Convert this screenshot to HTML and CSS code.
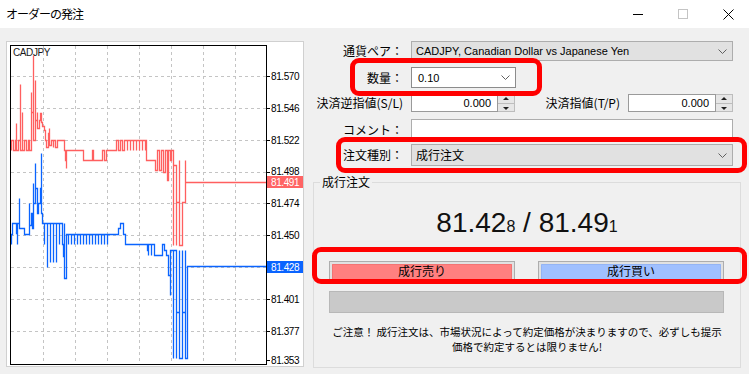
FILE: index.html
```html
<!DOCTYPE html>
<html lang="ja">
<head>
  <meta charset="UTF-8">
  <title>オーダーの発注</title>
  <link rel="stylesheet" href="styles.css">
</head>
<body>
  <div class="titlebar">
    <span class="title">オーダーの発注</span>
    <div class="win-controls">
      <svg width="11" height="11" viewBox="0 0 11 11"><path d="M0 5.5H10" stroke="#000" stroke-width="1"/></svg>
      <svg width="11" height="11" viewBox="0 0 11 11"><rect x="0.5" y="0.5" width="9" height="9" fill="none" stroke="#c4c4c4"/></svg>
      <svg width="11" height="11" viewBox="0 0 11 11"><path d="M0.5 0.5L10.5 10.5M10.5 0.5L0.5 10.5" stroke="#000" stroke-width="1"/></svg>
    </div>
  </div>

  <div class="main">
    <!-- tick chart -->
    <div class="chart">
      <svg width="298" height="326" viewBox="6 41 298 326">
        <rect x="6.5" y="41.5" width="297" height="325" fill="#fff" stroke="#d0d0d0"/>
        <g class="grid" stroke="#c4c4c4" stroke-dasharray="3 3" stroke-width="1">
          <path d="M43.5 46V364M75.5 46V364M107.5 46V364M139.5 46V364M171.5 46V364M203.5 46V364M235.5 46V364"/>
          <path d="M11 76.5H266M11 108.5H266M11 140.5H266M11 172.5H266M11 203.5H266M11 235.5H266M11 267.5H266M11 299.5H266M11 331.5H266"/>
        </g>
        <g stroke="#000" stroke-width="1">
          <path d="M266 76.5H270M266 108.5H270M266 140.5H270M266 172.5H270M266 203.5H270M266 235.5H270M266 267.5H270M266 299.5H270M266 331.5H270M266 360.5H270"/>
        </g>
        <g class="lines" transform="translate(0.5 0.5)" fill="none" stroke-width="1.3">
          <path stroke="#ff5f5f"
            d="M11 150V140H13V150H15V140H16V123V150H18V140H20V84V150H22V112V150H24V140H26V150H28V140H29V150H31V92V112H33V55V140H35V80V120H37V112V128H39V120H40V113H41V122H42V126H44V130H45V140H46V147H48V140V133H49V128V145H51V140H53V147V140H55V147H57V140H64V150H65V160H66V168V150H83V160H92V150H93V160H102V150H104V160H106V150H116V140H118V150H120V140H122V150H124V140H127V150V140H130V150V140H133V150V140H136V150V140H139V150V140H142V150V140H145V150V140H146V160H155V170H157V150H159V170H161V150H163V172H165V150H167V180H168V150H170V160H171V150H173V245V165H176V245V202H179V160V245H182V202H185V160V182H266"/>
          <path stroke="#0a64ff"
            d="M11 244V234H12V223H16V233H17V244V223H19V198V228H24V234H29V203V225H31V213H32V228H33V183V203H35V163V188H37V213H38V203H40V188H41V153V213H42V223H44V244V223H47V267V223H50V262V223H53V262V223H56V262V223H59V244V223H62V244H63V256H64V223V278H66V263V234H68V244V234H71V244V234H74V244V234H77V244V234H80V244V234H83V244V234H86V244V234H89V244V234H92V244V234H95V244V234H98V244V234H101V244V234H104V244V234H107V244V234H118V228H120V223H123V234H125V244H147V250H148V255V244H151V255V244H154V255H162V244H164V250H166V255H168V275H170V295V250H173V358V250H176V358V312H179V250V358H182V250V312H185V250V358H187V266H266"/>
        </g>
        <rect x="10.5" y="45.5" width="256" height="319" fill="none" stroke="#000"/>
        <text class="sym" x="13" y="56">CADJPY</text>
        <g class="axis">
          <text x="271" y="80">81.570</text>
          <text x="271" y="112">81.546</text>
          <text x="271" y="144">81.522</text>
          <text x="271" y="175">81.498</text>
          <text x="271" y="207">81.474</text>
          <text x="271" y="239">81.450</text>
          <text x="271" y="303">81.401</text>
          <text x="271" y="335">81.377</text>
          <text x="271" y="364">81.353</text>
        </g>
        <rect x="267" y="176" width="36" height="12" fill="#ff6464"/>
        <text class="tag" x="271" y="186">81.491</text>
        <rect x="267" y="261" width="36" height="12" fill="#0a64ff"/>
        <text class="tag" x="271" y="271">81.428</text>
      </svg>
    </div>

    <div class="panel">
      <div class="row r1">
        <label class="lbl">通貨ペア：</label>
        <div class="combo wide">
          <span class="latin">CADJPY, Canadian Dollar vs Japanese Yen</span>
          <svg width="9" height="5" viewBox="0 0 9 5"><path d="M0.5 0.5L4.5 4.5L8.5 0.5" fill="none" stroke="#606060"/></svg>
        </div>
      </div>
      <div class="row r2">
        <label class="lbl">数量：</label>
        <div class="combo volume">
          <span class="latin">0.10</span>
          <svg width="9" height="5" viewBox="0 0 9 5"><path d="M0.5 0.5L4.5 4.5L8.5 0.5" fill="none" stroke="#606060"/></svg>
        </div>
      </div>
      <div class="row r3">
        <label class="lbl">決済逆指値(S/L)</label>
        <div class="stops">
          <div class="spin sl">
            <div class="spin-input latin">0.000</div>
            <div class="spin-btns"><span class="up"></span><span class="down"></span></div>
          </div>
          <label class="lbl-tp">決済指値(T/P)</label>
          <div class="spin tp">
            <div class="spin-input latin">0.000</div>
            <div class="spin-btns"><span class="up"></span><span class="down"></span></div>
          </div>
        </div>
      </div>
      <div class="row r4">
        <label class="lbl">コメント：</label>
        <div class="textbox wide"></div>
      </div>
      <div class="row r5">
        <label class="lbl">注文種別：</label>
        <div class="combo wide">
          <span>成行注文</span>
          <svg width="9" height="5" viewBox="0 0 9 5"><path d="M0.5 0.5L4.5 4.5L8.5 0.5" fill="none" stroke="#606060"/></svg>
        </div>
      </div>

      <fieldset class="market">
        <legend>成行注文</legend>
        <div class="price">81.42<small>8</small> / 81.49<small>1</small></div>
        <div class="trade-btns">
          <button class="btn sell"><span>成行売り</span></button>
          <button class="btn buy"><span>成行買い</span></button>
        </div>
        <div class="status-bar"></div>
        <p class="notice">ご注意！ 成行注文は、市場状況によって約定価格が決まりますので、必ずしも提示<br>価格で約定するとは限りません!</p>
      </fieldset>

      <!-- red highlight marks -->
      <div class="mark mark-volume"></div>
      <div class="mark mark-type"></div>
      <div class="mark mark-buttons"></div>
    </div>
  </div>
</body>
</html>
```

FILE: styles.css
```css
body {
  margin: 0;
  width: 749px;
  height: 374px;
  overflow: hidden;
  background-color: #f0f0f0;
  font-family: "Noto Sans CJK JP", sans-serif;
  font-size: 12px;
  color: #000;
}

.latin {
  font-family: "Liberation Sans", Arial, sans-serif;
  font-size: 11px;
}

.titlebar {
  height: 28px;
  background-color: #fff;
  display: flex;
  align-items: center;
  justify-content: space-between;
  padding-left: 6px;
}

.title {
  font-size: 12px;
  line-height: 16px;
  letter-spacing: -1px;
}

.win-controls {
  display: flex;
  align-items: center;
  gap: 34px;
  padding-right: 15px;
}

.main {
  display: flex;
  padding: 13px 0 0 6px;
}

.chart {
  width: 298px;
  height: 326px;
  flex: none;
}

.chart svg {
  display: block;
  shape-rendering: crispEdges;
}

.chart .lines {
  shape-rendering: auto;
}

.chart text {
  font-family: "Liberation Sans", Arial, sans-serif;
  font-size: 10px;
  letter-spacing: -0.4px;
  fill: #000;
}

.chart .sym {
  fill: #1a1a1a;
}

.chart .tag {
  fill: #fff;
}

.panel {
  position: relative;
  margin-left: 6px;
  width: 439px;
}

.row {
  display: flex;
  align-items: stretch;
}

.lbl {
  width: 93px;
  flex: none;
  margin-right: 8px;
  text-align: right;
  white-space: nowrap;
  line-height: 16px;
  align-self: center;
}

.r1 { height: 20px; }
.r2 { height: 21px; margin-top: 6px; }
.r3 { height: 18px; margin-top: 6px; }
.r4 { height: 21px; margin-top: 7px; }
.r5 { height: 22px; margin-top: 4px; }

.wide {
  width: 322px;
}

.combo {
  box-sizing: border-box;
  display: flex;
  align-items: center;
  justify-content: space-between;
  padding: 0 5px 0 4px;
  border: 1px solid #adadad;
  background-color: #e1e1e1;
  line-height: 16px;
}

.combo.volume {
  width: 105px;
  background-color: #fff;
  border-color: #8c8c8c;
  padding-left: 6px;
}

.stops {
  width: 322px;
  display: flex;
  align-items: stretch;
}

.spin {
  display: flex;
  width: 104px;
}

.spin.tp {
  width: 105px;
}

.spin-input {
  flex: 1;
  box-sizing: border-box;
  background-color: #fff;
  border: 1px solid #9a9a9a;
  text-align: right;
  padding-right: 6px;
  line-height: 16px;
}

.spin-btns {
  width: 17px;
  display: flex;
  flex-direction: column;
  background-color: #e6e6e6;
  border: 1px solid #bdbdbd;
  border-left: none;
  box-sizing: border-box;
}

.spin-btns span {
  flex: 1;
  position: relative;
}

.spin-btns .up {
  border-bottom: 1px solid #bdbdbd;
}

.spin-btns span::after {
  content: "";
  position: absolute;
  left: 5px;
  border-left: 3px solid transparent;
  border-right: 3px solid transparent;
}

.spin-btns .up::after {
  top: 2px;
  border-bottom: 3px solid #202020;
}

.spin-btns .down::after {
  top: 3px;
  border-top: 3px solid #202020;
}

.lbl-tp {
  margin-left: auto;
  margin-right: 8px;
  align-self: center;
  line-height: 16px;
  white-space: nowrap;
}

.textbox {
  box-sizing: border-box;
  background-color: #fff;
  border: 1px solid #adadad;
}

.market {
  box-sizing: border-box;
  height: 194px;
  margin: 8px 8px 0 3px;
  padding: 0;
  border: 1px solid #dcdcdc;
  min-width: 0;
}

.market legend {
  margin-left: 6px;
  padding: 0 2px;
  line-height: 16px;
}

.price {
  margin-top: 17px;
  text-align: center;
  font-family: "Liberation Sans", Arial, sans-serif;
  font-size: 28px;
  line-height: 32px;
  color: #111;
}

.price small {
  font-size: 16px;
}

.trade-btns {
  display: flex;
  justify-content: space-between;
  padding: 0 16px 0 15px;
  margin-top: 18px;
}

.btn {
  box-sizing: border-box;
  width: 186px;
  height: 22px;
  padding: 2px;
  border: 1px solid #adadad;
  background-color: #e1e1e1;
  font-family: inherit;
  font-size: 12px;
  display: flex;
}

.btn span {
  flex: 1;
  line-height: 14px;
  border-radius: 1px;
}

.sell span {
  background-color: #ff8080;
  box-shadow: inset 0 0 0 1px #f27474;
}

.buy span {
  background-color: #a0c0ff;
  box-shadow: inset 0 0 0 1px #94b4f4;
}

.status-bar {
  box-sizing: border-box;
  height: 22px;
  margin: 8px 16px 0 15px;
  background-color: #c9c9c9;
  border: 1px solid #b8b8b8;
}

.notice {
  margin: 11px 0 0;
  text-align: center;
  white-space: nowrap;
  font-size: 10.5px;
  line-height: 15px;
}

.mark {
  position: absolute;
  box-sizing: border-box;
  border: 5px solid #ff0000;
  border-radius: 9px;
}

.mark-volume {
  left: 40px;
  top: 17px;
  width: 192px;
  height: 38px;
}

.mark-type {
  left: 26px;
  top: 96px;
  width: 411px;
  height: 36px;
}

.mark-buttons {
  left: 2px;
  top: 206px;
  width: 435px;
  height: 37px;
}
```
